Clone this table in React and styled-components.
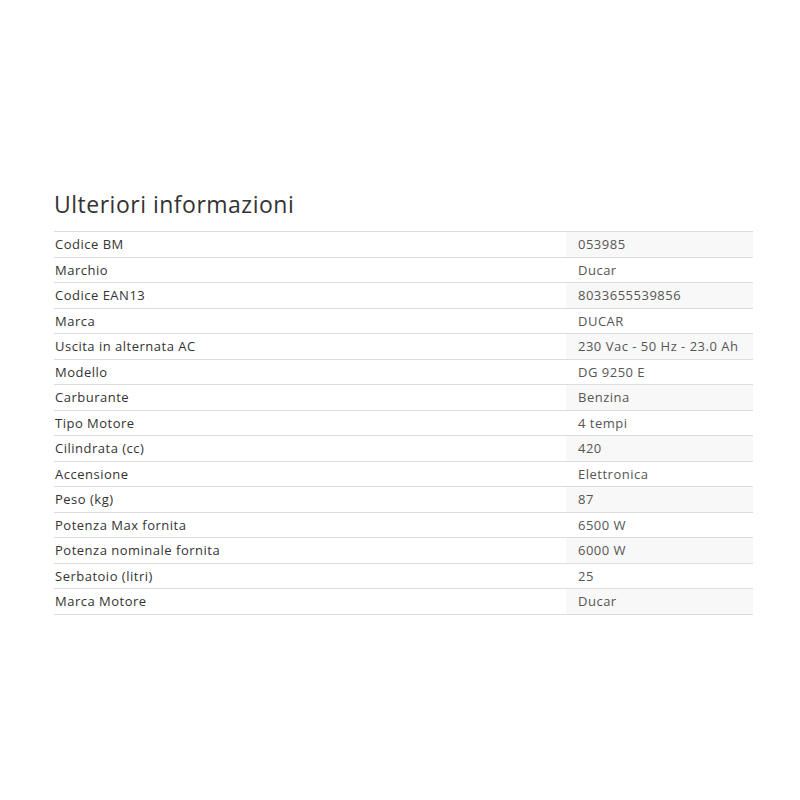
import React from 'react';
import styled, { createGlobalStyle } from 'styled-components';

const GlobalStyle = createGlobalStyle`
    body {
        margin: 0;
        background: #fff;
        font-family: "Open Sans", "Noto Sans", sans-serif;
    }
`

const Page = styled.div`
    padding: 187px 47px 0 54px;
`

const Title = styled.h2`
    margin: 0 0 10px 0;
    font-size: 23px;
    font-weight: 400;
    line-height: 34px;
    color: #333;
    letter-spacing: 0.5px;
`

const Table = styled.table`
    width: 100%;
    border-collapse: collapse;
    font-size: 13px;
    letter-spacing: 0.5px;
    border-bottom: 1px solid #dcdcdc;
`

const Row = styled.tr`
    border-top: 1px solid #dcdcdc;
`

const Label = styled.th`
    box-sizing: border-box;
    width: 512px;
    padding: 4px 8px 4px 1px;
    text-align: left;
    font-weight: 400;
    line-height: 16.5px;
    color: #333;
`

const Value = styled.td`
    padding: 4px 12px;
    line-height: 16.5px;
    color: #555;
    background: ${props => props.$striped ? '#f8f8f8' : 'transparent'};
`

const rows = [
    ['Codice BM', '053985'],
    ['Marchio', 'Ducar'],
    ['Codice EAN13', '8033655539856'],
    ['Marca', 'DUCAR'],
    ['Uscita in alternata AC', '230 Vac - 50 Hz - 23.0 Ah'],
    ['Modello', 'DG 9250 E'],
    ['Carburante', 'Benzina'],
    ['Tipo Motore', '4 tempi'],
    ['Cilindrata (cc)', '420'],
    ['Accensione', 'Elettronica'],
    ['Peso (kg)', '87'],
    ['Potenza Max fornita', '6500 W'],
    ['Potenza nominale fornita', '6000 W'],
    ['Serbatoio (litri)', '25'],
    ['Marca Motore', 'Ducar'],
]

export default function App() {
    return (
        <Page>
            <GlobalStyle />
            <Title>Ulteriori informazioni</Title>
            <Table>
                <tbody>
                    {rows.map(([label, value], i) => (
                        <Row key={label}>
                            <Label>{label}</Label>
                            <Value $striped={i % 2 === 0}>{value}</Value>
                        </Row>
                    ))}
                </tbody>
            </Table>
        </Page>
    )
}
